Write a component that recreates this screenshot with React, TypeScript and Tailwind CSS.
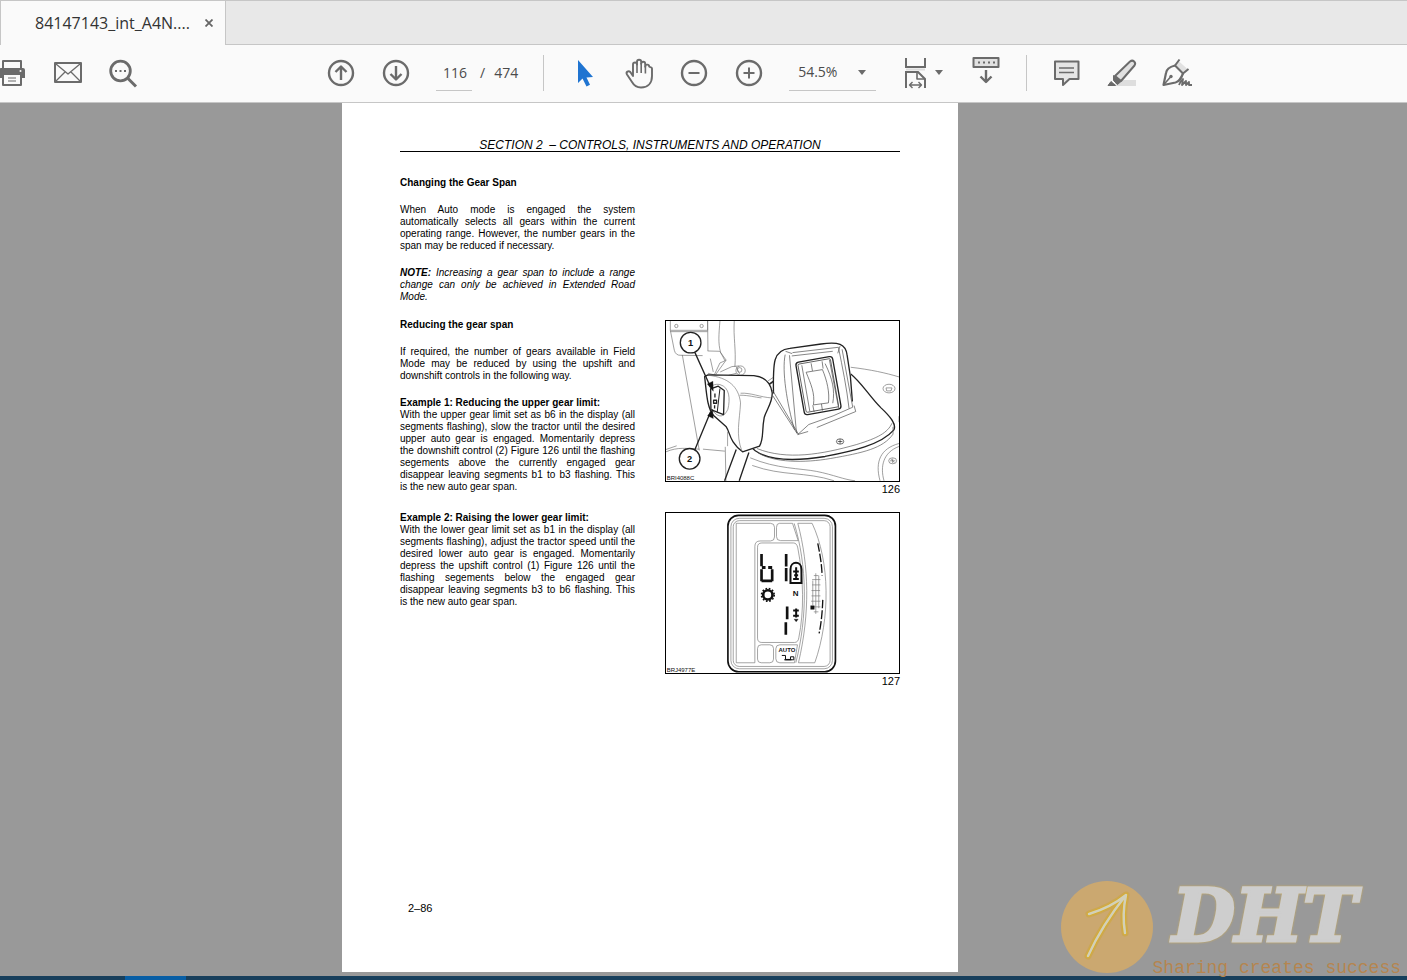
import { useState, type ReactNode } from "react"

type IconProps = { children: ReactNode }

function Icon({ children }: IconProps) {
  return (
    <svg
      viewBox="0 0 28 28"
      className="h-7 w-7 overflow-visible"
      fill="none"
      stroke="#6b6b6b"
      strokeWidth="2"
      strokeLinejoin="round"
      aria-hidden="true"
    >
      {children}
    </svg>
  )
}

function ToolButton({ label, children }: { label: string; children: ReactNode }) {
  return (
    <button type="button" aria-label={label} className="h-7 w-7 shrink-0">
      <Icon>{children}</Icon>
    </button>
  )
}

function Caret() {
  return (
    <svg viewBox="0 0 8 5" className="h-[5px] w-2" fill="#6b6b6b" aria-hidden="true">
      <path d="M0 0h8L4 5z" />
    </svg>
  )
}

function TabBar() {
  return (
    <header className="flex h-[45px] border-t border-[#c6c6c6] bg-[#e8e8e8]">
      <div className="flex w-[226px] items-center border-x border-[#c6c6c6] bg-[#fafafa] pl-[34px]">
        <span className="text-base text-[#333333]">84147143_int_A4N....</span>
        <button type="button" aria-label="Close tab" className="ml-[11px] p-1">
          <svg viewBox="0 0 8 8" className="h-2 w-2" stroke="#666666" strokeWidth="1.8" aria-hidden="true">
            <path d="M.5.5l7 7M7.5.5l-7 7" />
          </svg>
        </button>
      </div>
      <div className="flex-1 border-b border-[#c6c6c6]" />
    </header>
  )
}

function Toolbar() {
  const [page, setPage] = useState("116")

  return (
    <div className="flex h-[58px] items-center overflow-hidden border-b border-[#c6c6c6] bg-[#fafafa] pb-0.5 text-sm text-[#4b4b4b]">
      <div className="-ml-0.5 flex shrink-0 gap-7">
        <ToolButton label="Print">
          <path d="M5 10V2h18v8" />
          <path d="M3 9h22a2 2 0 0 1 2 2v8h-4v-4H5v4H1v-8a2 2 0 0 1 2-2z" fill="#6b6b6b" stroke="none" />
          <path d="M5 15h18v11H5z" fill="#fafafa" />
          <path d="M10 19h8M10 22h8" strokeWidth="1.2" />
          <circle cx="22.5" cy="12" r="1" fill="#fafafa" stroke="none" />
        </ToolButton>
        <ToolButton label="Send by email">
          <path d="M1 4h26v19H1z" />
          <path d="M2 5l12 10L26 5M2 22l9-9M26 22l-9-9" strokeWidth="1.3" />
        </ToolButton>
        <ToolButton label="Find text">
          <circle cx="10.5" cy="12" r="9.800" strokeWidth="2.8" />
          <path d="M18 19.5l8 8" strokeWidth="3" />
          <path d="M5 11h2v2H5zM9.500 11h2v2h-2zM14 11h2v2h-2z" fill="#6b6b6b" stroke="none" />
        </ToolButton>
      </div>

      <div className="ml-[189px] flex shrink-0 items-center">
        <div className="flex gap-[27px]">
          <ToolButton label="Previous page">
            <circle cx="14" cy="14" r="12" strokeWidth="2.400" />
            <path d="M14 21V8M8.500 13L14 7.500l5.500 5.500" strokeWidth="2.400" />
          </ToolButton>
          <ToolButton label="Next page">
            <circle cx="14" cy="14" r="12" strokeWidth="2.400" />
            <path d="M14 7v13M8.500 15l5.500 5.500 5.500-5.500" strokeWidth="2.400" />
          </ToolButton>
        </div>
        <input
          aria-label="Page number"
          value={page}
          onChange={(e) => setPage(e.target.value)}
          className="ml-[26px] h-9 w-9 border-b border-[#c6c6c6] pl-0.5 text-center"
        />
        <span className="ml-2">/</span>
        <span className="ml-[9px]">474</span>
      </div>

      <div className="ml-[25px] h-9 w-px shrink-0 bg-[#c6c6c6]" />

      <div className="ml-[26px] flex shrink-0 gap-[27px]">
        <ToolButton label="Select">
          <path d="M8 1v23l4.500-4.500 4 8 3.500-1.800-3.500-7.200 6.500-.5z" fill="#1f74d1" stroke="none" />
        </ToolButton>
        <ToolButton label="Hand tool">
          <path
            d="M8 17V5.500a2 2 0 0 1 4 0V2.800a2.100 2.100 0 0 1 4.200 0v2a2 2 0 0 1 4 0v3a2 2 0 0 1 4-.3c.2 1 2.800 0 2.800 2V17c0 7-4 11.500-11 11.500-5 0-7-2-9-5.500l-5-7.500c-1.500-2.500 1.500-4.300 3.300-2.500z"
            strokeWidth="1.9"
          />
          <path d="M12 5v9M16.200 4v10M20.400 7v7.500" strokeWidth="1.600" />
        </ToolButton>
        <ToolButton label="Zoom out">
          <circle cx="14" cy="14" r="12" strokeWidth="2.400" />
          <path d="M8.500 14h11" />
        </ToolButton>
        <ToolButton label="Zoom in">
          <circle cx="14" cy="14" r="12" strokeWidth="2.400" />
          <path d="M8.500 14h11M14 8.500v11" />
        </ToolButton>
      </div>

      <div className="relative ml-[26px] shrink-0">
        <select
          aria-label="Zoom level"
          defaultValue="54.5%"
          className="block h-9 w-[87px] appearance-none border-b border-[#c6c6c6] pl-[9px]"
        >
          <option>54.5%</option>
          <option>75%</option>
          <option>100%</option>
        </select>
        <span className="pointer-events-none absolute inset-y-0 right-[10px] flex items-center">
          <Caret />
        </span>
      </div>

      <button type="button" aria-label="Fit page" className="ml-[27px] flex shrink-0 items-center gap-1">
        <Icon>
          <path d="M3 -1v9h19v-9" strokeLinejoin="miter" />
          <path d="M3 10.500h19" stroke="#dcdcdc" />
          <path d="M3 29V13h12l7 7v9" strokeLinejoin="miter" />
          <path d="M14 13v7h8" strokeWidth="1.6" />
          <path d="M6.500 26h12M9.500 23l-3 3 3 3M15.500 23l3 3-3 3" strokeWidth="1.4" />
        </Icon>
        <Caret />
      </button>
      <div className="ml-[29px] shrink-0">
        <ToolButton label="Show toolbar below">
          <path d="M1.500 2h25v9h-25z" fill="#e1e1e1" />
          <path d="M6 5.500h2v2H6zM11 5.500h2v2h-2zM16 5.500h2v2h-2zM21 5.500h2v2h-2z" fill="#6b6b6b" stroke="none" />
          <path d="M14 14v12M8.500 20.500L14 26l5.500-5.500" strokeWidth="2.400" />
        </ToolButton>
      </div>

      <div className="ml-[26px] h-9 w-px shrink-0 bg-[#c6c6c6]" />

      <div className="ml-[26px] flex shrink-0 gap-[27px]">
        <ToolButton label="Add comment">
          <path d="M2 2.500h23.500V20h-9L10 26v-6H2z" fill="#e5e5e5" />
          <path d="M6 9h15M6 13.500h15" strokeWidth="1.400" />
        </ToolButton>
        <ToolButton label="Highlight text">
          <path d="M10 21h18v6H4z" fill="#dedede" stroke="none" />
          <path d="M7 17L22 2.500c3-2.300 6.500 1 4.500 4L13 22z" fill="#e1e1e1" />
          <path d="M5.500 16.500l7.500 6-3.500 3-4-4zM3 22.500l4.500 4H0z" fill="#6b6b6b" strokeWidth="1" />
        </ToolButton>
        <ToolButton label="Sign document">
          <path d="M15.500 2l9 8-4.500 4-8-7.500z" fill="#e1e1e1" stroke="none" />
          <path d="M16.500 .5l-4.500 6 8 8 5.500-4.500" />
          <path d="M12 6.500C6 8 3.500 10 3 14L.5 26l12-2.500c4-1 5.500-4 7.500-9" strokeWidth="2.200" />
          <path d="M.5 26l7.200-8.200" strokeWidth="1.600" />
          <path d="M16 26c1-2.500 2-4.500 4-6l-1 6 4-4v4l3-3v3h3" strokeWidth="1.800" />
          <circle cx="8" cy="17.500" r="1.700" fill="#6b6b6b" stroke="none" />
        </ToolButton>
      </div>
    </div>
  )
}

/* Manual text is set line by line, as in the printed edition. */
function Lines({ lines, className = "" }: { lines: ReactNode[]; className?: string }) {
  return (
    <p className={className}>
      {lines.map((line, i) => (
        <span
          key={i}
          className={
            i === lines.length - 1
              ? "block whitespace-nowrap"
              : "block whitespace-nowrap [text-align-last:justify]"
          }
        >
          {line}
        </span>
      ))}
    </p>
  )
}

function ControlsDrawing() {
  return (
    <svg
      viewBox="17 17 700 480"
      className="block w-full"
      fill="none"
      stroke="#222222"
      strokeWidth="2"
      strokeLinejoin="round"
      role="img"
      aria-label="Upshift and downshift controls"
    >
      <g stroke="#6f6f6f">
        <path d="M30 17v28h112V17M30 49h112M30 45l12 60q4 16 20 15l65 1M142 17l1 90M179 17c-3 40-6 66 2 94l14 27-29 40M222 17c-3 50 6 85 2 138M142 107l36 1 20 27-19 8-17 36-19-5M66 119l51 287M150 130l9 40M195 395l2 103M17 410c35-15 62-10 100-8M17 403l32-11M128 402l66 6" />
        <circle cx="48" cy="32" r="5" />
        <circle cx="124" cy="32" r="5" />
        <circle cx="241" cy="166" r="14" />
        <circle cx="238" cy="164" r="7" />
        <path d="M180 170l35-16 22-2M205 180l24-6M228 154l10 22M322 198l18-12M326 210l17-11M572 156c60 7 105 17 145 29M270 428c80 34 150 31 200 41 50 10 83 25 115 28M276 451c92 33 160 18 246 46M717 385c-55 15-73 54-57 112M717 394c-48 18-57 60-45 103" />
        <ellipse cx="687" cy="220" rx="18" ry="13" />
        <path d="M678 218h18l-3 9h-13zM717 303v18" />
        <ellipse cx="698" cy="437" rx="12" ry="9" />
        <path d="M690 437h16M698 430v14M693 432l10 10" />
      </g>
      <path d="M341 197c-45 28-65 66-76 98-10 40-12 90 20 112 45 31 130 30 210 17 80-15 168-35 206-79 10-17-9-40-38-67-37-37-58-76-91-102" strokeWidth="4" />
      <path d="M290 400c90 36 195 18 300-12 62-19 93-35 106-64M699 335v22c-30 43-90 56-187 73-80 14-172 13-220-18" stroke="#555555" />
      <path d="M337 240l9-100c2-33 19-39 50-42l95-12c45-6 66-3 71 24l25 162-175 84z" fill="white" stroke="none" />
      <path d="M340 235c-2-95-1-131 49-136l94-13c52-8 74 0 78 33l10 65 6 75" strokeWidth="4" />
      <path d="M338 242l75 116 31-9M470 337l117-48-5-18M337 225l78 132M375 118c-10 50 5 145 28 226M388 120l21 233M397 112l138-16c12 60 25 122 32 184M376 108l20 7M540 92l-7 22M546 102l32 174-59 26-73 26-33 30M395 122l123-14" stroke="#484848" />
      <rect x="406" y="142" width="112" height="160" rx="9" transform="rotate(-10 406 142)" fill="white" strokeWidth="4" />
      <rect x="413" y="147" width="99" height="147" rx="4" transform="rotate(-10 413 147)" />
      <path d="M438 171l49-8c14 33 22 70 18 100l-45 6c5-35-8-63-22-98zM425 150l24 138M508 134l28 146M453 144l4 23M486 138l3 22M458 270l4 20M484 266l3 20M495 145c22 45 30 80 23 119" stroke="#444444" />
      <path d="M133 184l10-5 138 2c38 4 51 25 55 51 2 30-17 50-24 75-8 40 0 61-14 86l-51 17c-40-29-37-58-49-75l-38-34c-20-23-21-68-27-117z" fill="white" strokeWidth="4" />
      <path d="M144 180c61 7 91 34 97 83-3 55-15 94 4 145M241 234c30-2 60 12 92 14M238 240c30 0 45 6 66 8M202 350v43" stroke="#777777" />
      <path d="M151 228c-3-18 13-23 28-20 30 8 31 44 24 74-11 25-28 27-45 5z" stroke="#777777" />
      <path d="M151 221l23-8 18 13-2 72-38-15z" fill="white" strokeWidth="4" />
      <path d="M179 220l-8 70" strokeWidth="3" />
      <path d="M164 235v12M160 255h9v9h-9zM163 270v10" strokeWidth="4" />
      <path d="M228 403l-35 94M266 412l-29 85" strokeWidth="4" />
      <path d="M104 112l47 104M103 405l48-115" strokeWidth="4" />
      <path d="M159 228l-18-22 17-8zM157 282l2 28-17-8z" fill="#111111" strokeWidth="1" />
      <circle cx="91" cy="82" r="31" fill="white" strokeWidth="4" />
      <circle cx="88" cy="431" r="31" fill="white" strokeWidth="4" />
      <ellipse cx="540" cy="379" rx="11" ry="8" fill="white" />
      <path d="M533 379h14M540 372v14" />
      <g fill="#111111" stroke="none" className="font-[Liberation_Sans,sans-serif]">
        <text x="83" y="92" className="text-[28px] font-bold">1</text>
        <text x="80" y="441" className="text-[28px] font-bold">2</text>
        <text x="19" y="494" className="text-[18px]">BRI4088C</text>
      </g>
    </svg>
  )
}

function DisplayDrawing() {
  return (
    <svg
      viewBox="17 17 700 480"
      className="block w-full"
      fill="none"
      stroke="#777777"
      strokeWidth="2"
      role="img"
      aria-label="Transmission display"
    >
      <rect x="203" y="24" width="323" height="470" rx="32" stroke="#111111" strokeWidth="5" />
      <rect x="212" y="33" width="305" height="452" rx="25" />
      <rect x="219" y="40" width="291" height="438" rx="18" />
      <path d="M228 48h103q12 0 12 12v29q0 12-12 12h-31q-16 0-16 16v350h-56zM358 48h39l17 52h-53q-12 0-12-12V60q0-12 9-12zM413 48h43c54 115 55 285 8 419h-49c35-150 32-290-2-419z" />
      <path d="M402 48c39 125 41 279 5 419" />
      <path d="M305 107h95q10 0 13 15c18 93 19 191 3 270q-2 14-13 14h-98q-13 0-13-13V120q0-13 13-13z" />
      <rect x="292" y="413" width="48" height="54" rx="11" />
      <path d="M359 413h53l-9 54h-44q-12 0-12-12v-30q0-12 12-12z" />
      <path d="M473 108c5 25 12 61 13 97M488 278c-1 30-4 68-11 101" stroke="#111111" strokeWidth="4" strokeDasharray="26 6" />
      <path d="M461 205h14M456 217h25M456 233h25M454 250h26M454 266h27M453 282h28M453 299h28M461 314h14M467 198v122M476 205v98M458 220v74" />
      <path d="M451 295h12v12h-12z" fill="#111111" stroke="none" />
      <g stroke="#111111" strokeWidth="8">
        <path d="M304 140v37M304 186v36M304 221h32M336 186v36M378 140v38M378 182v40M381 298v38M377 345v38" />
        <path d="M305 181h11M324 181h12" strokeWidth="9" />
        <circle cx="323" cy="263" r="14" />
        <circle cx="323" cy="263" r="19" strokeWidth="5" strokeDasharray="5 5" />
        <path d="M391 227v-41c0-26 33-26 33 0v41z" strokeWidth="6" />
        <path d="M399 193h17M399 215h17M408 180v37M402 204h12M399 310h17M399 326h17M408 304v27" strokeWidth="6" />
        <path d="M402 336h12l-6 8z" fill="#111111" strokeWidth="1" />
        <path d="M365 445h11v12h15v-8h10v9h-29M375 458h19" strokeWidth="3" />
      </g>
      <g fill="#111111" stroke="none" className="font-[Liberation_Sans,sans-serif]">
        <text x="398" y="267" className="text-[24px] font-bold">N</text>
        <text x="355" y="434" className="text-[18px] font-bold">AUTO</text>
        <text x="19" y="494" className="text-[18px]">BRJ4977E</text>
      </g>
    </svg>
  )
}

function Figure({ number, children }: { number: number; children: ReactNode }) {
  return (
    <figure>
      <div className="border border-black">{children}</div>
      <figcaption className="mt-px text-right text-[11px] leading-3">{number}</figcaption>
    </figure>
  )
}

function ManualPage() {
  return (
    <article className="mx-auto mb-1 flex w-[616px] flex-col bg-white px-[58px] pt-9 font-[Liberation_Sans,Arial,sans-serif] text-[10px] leading-3 text-black">
      <h1 className="border-b border-black text-center text-xs leading-3 whitespace-pre italic">
        SECTION 2  – CONTROLS, INSTRUMENTS AND OPERATION
      </h1>

      <div className="mt-[25px] grid grid-cols-2 gap-x-[30px]">
        <section>
          <h2 className="font-bold">Changing the Gear Span</h2>
          <Lines
            className="mt-[15px]"
            lines={[
              "When Auto mode is engaged the system",
              "automatically selects all gears within the current",
              "operating range. However, the number gears in the",
              "span may be reduced if necessary.",
            ]}
          />
          <Lines
            className="mt-[15px] italic"
            lines={[
              <>
                <b>NOTE:</b> Increasing a gear span to include a range
              </>,
              "change can only be achieved in Extended Road",
              "Mode.",
            ]}
          />
        </section>

        <section className="col-start-1 mt-4">
          <h2 className="font-bold">Reducing the gear span</h2>
          <Lines
            className="mt-[15px]"
            lines={[
              "If required, the number of gears available in Field",
              "Mode may be reduced by using the upshift and",
              "downshift controls in the following way.",
            ]}
          />
          <h3 className="mt-[15px] font-bold">Example 1: Reducing the upper gear limit:</h3>
          <Lines
            lines={[
              "With the upper gear limit set as b6 in the display (all",
              "segments flashing), slow the tractor until the desired",
              "upper auto gear is engaged. Momentarily depress",
              "the downshift control (2) Figure 126 until the flashing",
              "segements above the currently engaged gear",
              "disappear leaving segments b1 to b3 flashing. This",
              "is the new auto gear span.",
            ]}
          />
        </section>
        <div className="mt-[17px]">
          <Figure number={126}>
            <ControlsDrawing />
          </Figure>
        </div>

        <section className="mt-[17px]">
          <h3 className="font-bold">Example 2: Raising the lower gear limit:</h3>
          <Lines
            lines={[
              "With the lower gear limit set as b1 in the display (all",
              "segments flashing), adjust the tractor speed until the",
              "desired lower auto gear is engaged. Momentarily",
              "depress the upshift control (1) Figure 126 until the",
              "flashing segements below the engaged gear",
              "disappear leaving segments b3 to b6 flashing. This",
              "is the new auto gear span.",
            ]}
          />
        </section>
        <div className="mt-[17px]">
          <Figure number={127}>
            <DisplayDrawing />
          </Figure>
        </div>
      </div>

      <footer className="mt-auto pb-[58px] pl-2 text-[11px]">2–86</footer>
    </article>
  )
}

function Watermark() {
  return (
    <div className="pointer-events-none absolute right-0 bottom-0 flex items-end">
      <svg viewBox="0 0 92 92" className="mb-[3px] h-[92px] w-[92px]" fill="none" strokeLinecap="round" aria-hidden="true">
        <circle cx="46" cy="46" r="46" fill="#cba870" />
        <g strokeLinejoin="round">
          <path d="M27 75C36 55 50 33 65 14C54 23 41 29 28 33M65 14C62 28 62 40 64 52" stroke="#cda63e" strokeWidth="7" opacity=".6" />
          <path d="M27 75C36 55 50 33 65 14C54 23 41 29 28 33M65 14C62 28 62 40 64 52" stroke="#d8ae2c" strokeWidth="4" />
          <path d="M27 75C36 55 50 33 65 14C54 23 41 29 28 33M65 14C62 28 62 40 64 52" stroke="#d2d0b8" strokeWidth="2.500" />
        </g>
      </svg>
      <div className="flex flex-col">
        <span className="mb-2 ml-5 font-['DejaVu_Serif',serif] text-[72px] leading-[72px] font-bold text-[#cecece] italic drop-shadow-[0_0_1px_#d0ae58] [-webkit-text-stroke:3px_#cecece]">
          DHT
        </span>
        <span className="pr-1.5 font-['Liberation_Mono',monospace] text-lg leading-4 text-[#b5854f]">
          Sharing creates success
        </span>
      </div>
    </div>
  )
}

export default function App() {
  return (
    <div className="flex min-h-screen flex-col bg-[#fafafa] font-['Open_Sans',sans-serif]">
      <TabBar />
      <Toolbar />
      <main className="relative flex flex-1 bg-[#999999] pr-[107px]">
        <ManualPage />
        <Watermark />
      </main>
      <div className="h-1 bg-[#173f5c]">
        <div className="ml-[125px] h-1 w-[61px] bg-[#075ea5]" />
      </div>
    </div>
  )
}
